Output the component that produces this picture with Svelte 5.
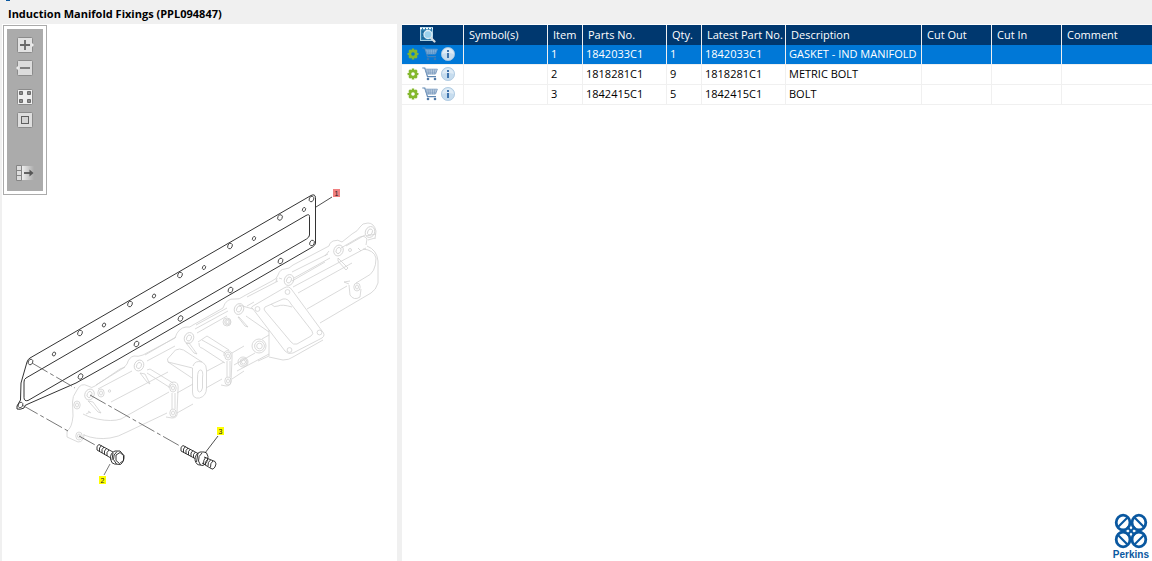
<script lang="ts">
	type Part = { item: number, partNo: string, qty: number, latest: string, description: string };

	const columns = [
		{ name: 'Symbol(s)', width: 84 },
		{ name: 'Item', width: 35 },
		{ name: 'Parts No.', width: 84 },
		{ name: 'Qty.', width: 35 },
		{ name: 'Latest Part No.', width: 84 },
		{ name: 'Description', width: 136 },
		{ name: 'Cut Out', width: 70 },
		{ name: 'Cut In', width: 70 }
	];

	const parts: Part[] = [
		{ item: 1, partNo: '1842033C1', qty: 1, latest: '1842033C1', description: 'GASKET - IND MANIFOLD' },
		{ item: 2, partNo: '1818281C1', qty: 9, latest: '1818281C1', description: 'METRIC BOLT' },
		{ item: 3, partNo: '1842415C1', qty: 5, latest: '1842415C1', description: 'BOLT' }
	];

	// Callouts on the drawing, one for each part
	const callouts = [
		{ item: 1, x: 333, y: 189 },
		{ item: 2, x: 99, y: 476 },
		{ item: 3, x: 217, y: 427 }
	];

	const bigHoles = [
		[311.5, 199], [280, 217.5], [230, 246], [180, 275], [130, 304], [80, 333], [30.5, 362], [20.5, 405],
		[312, 243], [280.5, 261], [230.5, 290], [180.5, 318.5], [136.5, 344], [80.5, 376.5]
	];
	const smallHoles = [[304, 209.5], [254, 238.5], [204, 267.5], [154, 296], [104, 325], [54, 354]];
	const bosses = [[370, 232], [338.5, 250.5], [289, 280], [239, 309], [189, 338], [139, 365.5], [89.5, 394.5]];
	const lugs = [[173, 388], [173, 413], [228, 356], [228, 381], [101, 393], [79, 436], [77, 405], [357, 287]];
	const flangeHoles = [[287.5, 292], [257.5, 309], [319.5, 332.5], [289.5, 350]];
	const ports = [[259, 346, 7], [243, 362, 5], [227, 322, 4]];

	let selected: number = $state(1);
</script>

{#snippet gear()}
	<svg width="12" height="12" viewBox="-6 -6 12 12" aria-hidden="true">
		{#each [0, 45, 90, 135] as angle}
			<rect x="-1.3" y="-5.4" width="2.6" height="10.8" rx="0.5" fill="#84b82c" transform="rotate({angle})" />
		{/each}
		<circle r="3.1" fill="none" stroke="#84b82c" stroke-width="2.4" />
		<circle r="1.8" class="hub" />
	</svg>
{/snippet}

{#snippet cart()}
	<svg width="16" height="14" viewBox="0 0 16 14" fill="none" aria-hidden="true">
		<path d="M0.3 1h2.5l2.7 8.6h8.500" stroke="#5f87b2" stroke-width="1.2" />
		<path d="M3.4 2.2h12l-1.9 4.800H5z" fill="#cfdbe9" stroke="#7f9fc3" stroke-width="0.9" />
		<path d="M4 4h10.7M4.5 5.7h9.6M6 2.3l.5 5M8.2 2.3v5M10.5 2.3v5M12.8 2.3l-.5 5" stroke="#7395bb" stroke-width="0.6" />
		<circle cx="6" cy="12" r="1.3" fill="#4f79a8" />
		<circle cx="13" cy="12" r="1.3" fill="#4f79a8" />
	</svg>
{/snippet}

{#snippet info()}
	<svg width="14" height="14" viewBox="0 0 14 14" aria-hidden="true">
		<circle cx="7" cy="7" r="6.6" fill="#c6dcee" stroke="#a9c6df" stroke-width="0.8" />
		<path d="M1.2 7a5.8 5.8 0 0 1 11.6 0Q7 5 1.2 7z" fill="#deebf6" />
		<path d="M6 3h2v2H6zM6 6h2v5H6z" fill="#3f74ad" />
	</svg>
{/snippet}

{#snippet bolt()}
	<path d="M99 444.5l14 7.5M97 450l13 7.5M99 444.5q-3 1-2 5.5M101.5 445.5q-3 2-2 6M104 447q-3 2-2 6M106.5 448.5q-3 2-2 6M109 450q-3 2-2 6" />
	<path d="M115 451q-5 2-4.5 8q1 5 4 5l6 .5q4-3 3.5-9l-4-4.5zM117 451.5q-4 3-3.5 8l3 4.5M116 455l4-2.500 3.500 3v5l-4 3-3.500-3zM113 453l-1 7" />
{/snippet}

{#snippet stud()}
	<path d="M183 445.5l15 8M181 451l14 7.5M183 445.5q-3 1-2 5.5M185.5 446.5q-3 2-2 6M188 448q-3 2-2 6M190.5 449q-3 2-2 6M193 450.5q-3 2-2 6M195.5 452q-3 2-2 6" />
	<path d="M200 452q-5 2-5 8q1 5 5 5l3 .5q5-3 5-9q-1-5-4-4.500zM202 453q-4 3-3.500 8l2 4M198 453l-1.500 9M204 457l11 4.500M202 463l9 5.500M206 457q-3 3-2.500 7M208 459q-3 2-2.500 6M210.500 460q-3 2-2.500 6M213 461q-3 2-2.500 6.500M215 461.500q2 2 0 5.500t-4 1.500" />
{/snippet}

<header>
	<span class="tab-edge"></span>
	<h1>Induction Manifold Fixings (PPL094847)</h1>
</header>

<main>
	<section class="drawing" aria-label="Drawing">
		<div class="toolbar">
			<div class="tools">
				<button aria-label="Zoom in">
					<svg width="18" height="16" viewBox="0 0 18 16">
						<rect x="1.5" y="0.5" width="15" height="15" rx="1" fill="#e2e2e2" stroke="#8b8b8b" />
						<path d="M15.500 5.500L18 8l-2.500 2.500z" fill="#eee" />
						<path d="M4 8h10M9 3v10" stroke="#686868" stroke-width="1.8" />
					</svg>
				</button>
				<button aria-label="Zoom out">
					<svg width="18" height="16" viewBox="0 0 18 16">
						<rect x="1.5" y="0.5" width="15" height="15" rx="1" fill="#dcdcdc" stroke="#8b8b8b" />
						<path d="M2.500 5.500L0 8l2.500 2.500z" fill="#eee" />
						<path d="M4 8h10" stroke="#686868" stroke-width="1.6" />
					</svg>
				</button>
				<button class="group" aria-label="Show all">
					<svg width="18" height="16" viewBox="0 0 18 16">
						<rect x="1.5" y="0.5" width="15" height="15" rx="1" fill="#efefef" stroke="#8b8b8b" />
						<path d="M3.5 2.5h3v3h-3zM11.500 2.500h3v3h-3zM3.500 10.500h3v3h-3zM11.500 10.500h3v3h-3z" fill="#8c8c8c" stroke="#6c6c6c" />
					</svg>
				</button>
				<button aria-label="Fit to window">
					<svg width="18" height="16" viewBox="0 0 18 16">
						<rect x="1.5" y="0.5" width="15" height="15" rx="1" fill="#dedede" stroke="#8b8b8b" />
						<rect x="5.5" y="4.5" width="7" height="7" fill="#d4d4d4" stroke="#606060" />
					</svg>
				</button>
				<button class="last" aria-label="Show parts list">
					<svg width="18" height="16" viewBox="0 0 18 16">
						<defs>
							<linearGradient id="fade"><stop offset="0" stop-color="#eee" /><stop offset="1" stop-color="#ababab" /></linearGradient>
						</defs>
						<rect x="6" y="1" width="12" height="14" fill="url(#fade)" />
						<path d="M.5.5h5v15h-5zM.5 5.5h5M.5 10.500h5" fill="#ddd" stroke="#858585" />
						<path d="M8 8h7" stroke="#555" stroke-width="1.8" />
						<path d="M13.5 4.5L17.5 8l-4 3.5z" fill="#555" />
					</svg>
				</button>
			</div>
		</div>

		<svg class="sheet" viewBox="2 24 395 537" preserveAspectRatio="xMinYMin meet" fill="none">
			<!-- manifold, drawn faint behind the fixings -->
			<g stroke="#d0d0d0" stroke-width="0.8">
				<path d="M375 239L376 231Q374 223 368 223 362 223 360 227 358 231 352 234L342 242Q338 239 333 241 329 243 329 246L293 265Q289 269 285 269 280 269 278 275 277 279 272 281L244 296Q239 300 235 299 226 298 223 308L193 325Q190 328 186 327 178 328 175 338L143 355Q138 357 134 356 129 357 127 364 125 368 120 369L95 386Q92 389 88 386 81 382 77 390 72 397 72.500 402L73 416Q72 428 67 431V437L78 442Q84 442 84 434" />
				<path d="M346 246l19-11M341 248l17-10q6-4 9 1l-1 6M294 278l36-20M292 272l36-18M278 281l-31 16M247 306l7-4M227 308l-31 17M197 333l30-17M195 329l33-18M176 337l-31 18M147 361l28-15M125 367l-29 18M98 389l34-18" />
				<path d="M292 281l33-19M293 287l73-39M298 293l54-30M367 246q10 4 11 15v22q-2 7-7 10l-51 30M363 249q11 1 13 9 0 15-10 19l-10 6M307 309l40-23M366 236l10-2M368 240l7-2M349 284l-5-2 6-1" />
				<path d="M338 258l10 10-2 2-8-9zM325 256l4-5M349 285l1 10q4 6 10 2l1-8M277 278l-1 4M279 278l3 1M358 248l3 3M189 343l8 11-3-1-8-10zM140 373l7 9 3 2-5-10zM239 317l9 10-3-1-7-9z" />
				<path d="M253 306l31-18q5-3 8 2l30 41q4 4 0 7l-29 15q-5 2-8-2l-32-42q-3-2 0-3zM265 307l18-8q5-1 8 5l21 27q2 3-1 5l-14 8q-4 1-6-2l-26-31q-2-2 0-4z" />
				<path d="M271 304q3 4 7 2t14 1M269 357l14 3q6 0 10-3l30-17M269 330v26l-11 5M246 316l23 16M239 305l14 4M269 354l-32 17M255 353l-21 12M262 339l7-4" />
				<path d="M168 362l-.5-3 8-9q4-2 8 0l20 13q3 2 3 7v18q0 8-7 10-7 1-7-6v-24zM193 366q2-6 9-4M168 362l24 16M197.500 378q0-8 3-8t2 8v10q-1 4-3 4t-2-4z" />
				<path d="M198 342l9-6 22 14M199 343q0 5 3 5l23 15M202 340l23 13M147 370l3-1 23 14M147 373l22 14M224 356v-3q3-5 8 0v6l-1 22q0 5-5 5l-5-1M169 388q0-6 5-6t4 8l-1 22q1 6-5 6l-6-1M175 393v16M230 361v16M172 393v16M227 361v16" />
				<path d="M83 414Q88 417 97 419 112 422 121 419L169 392M84 435Q96 440 110 438 118 437 127 432L167 413M177 413l16-9M206 388l16-9M177 393l16-9M207 371l17-9M232 353l12-7M232 379l12-8M111 402l57-30M88 401l5 1 8 11-3-1-8-9zM88 411l3 2M86 414l4-2" />
				{#each bosses as [x, y]}
					<ellipse cx={x} cy={y} rx="4.600" ry="5.600" transform="rotate(25 {x} {y})" />
					<ellipse cx={x} cy={y} rx="2.300" ry="3.200" transform="rotate(25 {x} {y})" />
				{/each}
				{#each lugs as [x, y]}
					<ellipse cx={x} cy={y} rx="3.200" ry="4" />
					<ellipse cx={x} cy={y} rx="1.500" ry="2" />
				{/each}
				{#each flangeHoles as [x, y]}
					<circle cx={x} cy={y} r="2.400" />
				{/each}
				{#each ports as [x, y, r]}
					<circle cx={x} cy={y} {r} />
					<circle cx={x + 0.5} cy={y} r={r * 0.7} />
					<circle cx={x + 0.5} cy={y} r={r * 0.4} />
				{/each}
				<circle cx="109.500" cy="391" r="1.200" />
				<circle cx="350" cy="250" r="1.500" />
			</g>

			<!-- gasket -->
			<g stroke="#333">
				<path d="M30 358L311 195.500q4-2 4.500 2V243q0 2-3 4L117 360 76 383 28 404q-4 1-4 4-4 2-7 1v-3l3.500-6 .5-17 6-21q1-3 3-4z" />
				<path d="M26 378L306 215.500q3.500-2 3.500 1V235q0 2-3 4L28 400.500q-4 1-4-3V382q0-3 2-4z" />
				<g stroke-width="0.8">
					{#each bigHoles as [x, y]}
						<ellipse cx={x} cy={y} rx="2.200" ry="2.900" transform="rotate(25 {x} {y})" />
					{/each}
					{#each smallHoles as [x, y]}
						<ellipse cx={x} cy={y} rx="1.500" ry="2.100" transform="rotate(25 {x} {y})" />
					{/each}
				</g>
			</g>

			<g stroke="#555" stroke-width="0.8">
				<path d="M32 363l43 25M90 395l90 51M22 405l46 26M79 436l18 10" stroke-dasharray="18 3 4 3" />
				<path d="M316 207l16-10M218 436l-13 17" stroke="#222" />
				<path d="M110 464l-6 11" />
			</g>
			<g stroke="#222" stroke-width="0.9">
				{@render bolt()}
				{@render stud()}
			</g>

			{#each callouts as { item, x, y }}
				<rect {x} {y} width="7" height="8" fill={item === selected ? '#f08080' : '#ffff00'} />
				<text x={x + 3.5} y={y + 7} fill="#222">{item}</text>
			{/each}
		</svg>
	</section>

	<section class="list">
		<table>
			<colgroup>
				<col style="width: 62px" />
				{#each columns as column}
					<col style="width: {column.width}px" />
				{/each}
				<col />
			</colgroup>
			<thead>
				<tr>
					<th class="actions">
						<button aria-label="Search parts">
							<svg width="16" height="16" viewBox="0 0 16 16">
								<rect x="0.5" y="0.5" width="12" height="13" fill="#2d7eae" stroke="#a9d0e4" />
								<path d="M0 1.5h13" stroke="#fff" stroke-dasharray="2 1" stroke-width="1.5" />
								<path d="M2 5h3M2 8h2M2 11h3" stroke="#12568a" />
								<circle cx="8" cy="7.5" r="4" fill="#9bd1ec" stroke="#dcecf5" stroke-width="1.3" />
								<path d="M11 11l3.5 3.5" stroke="#d7dde2" stroke-width="2.2" stroke-linecap="round" />
							</svg>
						</button>
					</th>
					{#each columns as column}
						<th>{column.name}</th>
					{/each}
					<th>Comment</th>
				</tr>
			</thead>
			<tbody>
				{#each parts as part}
					<tr class:selected={part.item === selected} onclick={() => selected = part.item}>
						<td class="actions">
							<div class="icons">
								<button aria-label="Options">{@render gear()}</button>
								<button class="buy" aria-label="Add to cart">{@render cart()}</button>
								<button aria-label="Part information">{@render info()}</button>
							</div>
						</td>
						<td></td>
						<td>{part.item}</td>
						<td>{part.partNo}</td>
						<td>{part.qty}</td>
						<td>{part.latest}</td>
						<td>{part.description}</td>
						<td></td>
						<td></td>
						<td></td>
					</tr>
				{/each}
			</tbody>
		</table>

		<div class="brand">
			<svg width="34" height="36" viewBox="-17 -18 34 36" fill="none" stroke="#0a58a0" stroke-width="2.8" aria-hidden="true">
				{#each [[1, 1], [-1, 1], [1, -1], [-1, -1]] as [sx, sy]}
					<g transform="scale({sx} {sy})">
						<ellipse cx="7.900" cy="8.400" rx="6.900" ry="7.400" />
						<path d="M3 14L13.500 3.500" stroke-width="2.200" />
						<path d="M0 0L4 4.200" stroke-width="2" />
					</g>
				{/each}
			</svg>
			<span>Perkins</span>
		</div>
	</section>
</main>

<style>
	:global(body) {
		margin: 0;
		background: #f0f0f0;
	}

	:global(#app) {
		display: flex;
		flex-direction: column;
		min-height: 100vh;
		font-family: "Open Sans", "Noto Sans", sans-serif;
		font-size: 11px;
		color: #000;
	}

	header {
		height: 24px;
		padding-left: 6px;
	}

	.tab-edge {
		display: block;
		width: 4px;
		height: 1px;
		background: #0a58a0;
	}

	h1 {
		margin: 0;
		padding: 5px 2px;
		font-size: 11px;
		line-height: 16px;
	}

	button {
		display: block;
		padding: 0;
		border: none;
		background: none;
	}

	svg {
		display: block;
	}

	main {
		flex: 1;
		display: grid;
		grid-template-columns: 395fr 750fr;
		column-gap: 5px;
		padding-left: 2px;
	}

	.drawing {
		position: relative;
		min-width: 0;
		background: #fff;
	}

	.sheet {
		width: 100%;
	}

	.sheet text {
		font: 7px "Liberation Sans", sans-serif;
		text-anchor: middle;
	}

	/* floats over the drawing */
	.toolbar {
		position: absolute;
		top: 1px;
		left: 1px;
		padding: 3px;
		border: 1px solid #ababab;
		background: #fff;
	}

	.tools {
		display: flex;
		flex-direction: column;
		gap: 7px;
		padding: 8px 9px 10px;
		background: #ababab;
	}

	.tools .group {
		margin-top: 6px;
	}

	.tools .last {
		margin-top: 30px;
	}

	.list {
		display: flex;
		flex-direction: column;
		min-width: 0;
		padding-top: 1px;
		background: #fff;
	}

	table {
		width: 100%;
		table-layout: fixed;
		border-collapse: separate;
		border-spacing: 0;
	}

	th, td {
		box-sizing: border-box;
		height: 20px;
		padding: 0 0 0 3px;
		border-right: 1px solid #f0f0f0;
		font-weight: normal;
		line-height: 18px;
		text-align: left;
		white-space: nowrap;
	}

	td {
		border-bottom: 1px solid #f0f0f0;
		vertical-align: top;
	}

	th {
		padding-left: 5px;
		background: #00386f;
		color: #fff;
	}

	th:last-child, td:last-child {
		border-right: none;
	}

	th.actions {
		padding-left: 18px;
	}

	.icons {
		display: flex;
		align-items: center;
		gap: 3px;
		height: 18px;
		padding-left: 2px;
	}

	.hub {
		fill: #fff;
	}

	.selected {
		background: #0078d7;
		color: #fff;
	}

	.selected .hub {
		fill: #0078d7;
	}

	.selected .buy {
		opacity: 0.7;
	}

	.brand {
		display: flex;
		flex-direction: column;
		align-items: center;
		align-self: flex-end;
		margin-top: auto;
		padding-right: 3px;
		color: #0a58a0;
		font: bold 10px/12px "Liberation Sans", sans-serif;
	}
</style>
